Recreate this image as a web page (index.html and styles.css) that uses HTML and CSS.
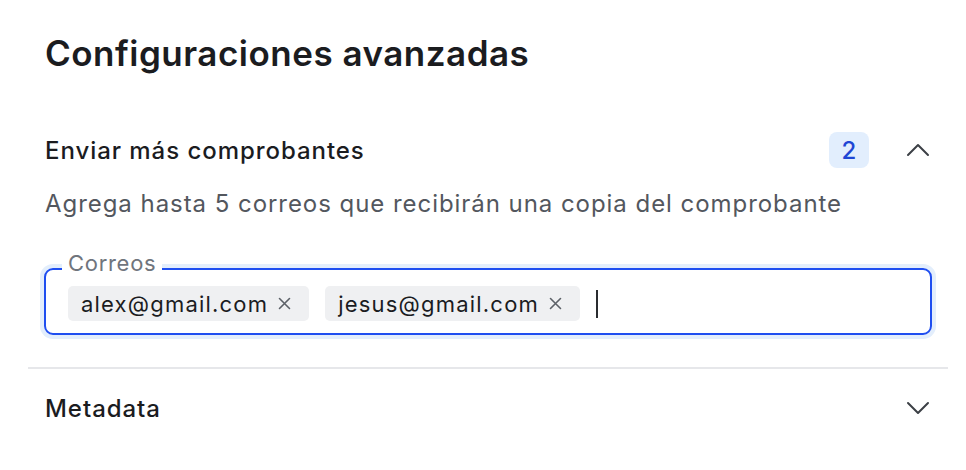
FILE: index.html
```html
<!DOCTYPE html>
<html lang="es">
<head>
<meta charset="utf-8">
<link rel="stylesheet" href="styles.css">
</head>
<body>
<div class="panel">
  <h1 class="title">Configuraciones avanzadas</h1>
  <section class="section open">
    <div class="sec-head">
      <span class="sec-title">Enviar más comprobantes</span>
      <span class="badge">2</span>
      <svg class="chev" width="24" height="24" viewBox="0 0 24 24" fill="none" stroke="currentColor" stroke-width="2" stroke-linecap="round" stroke-linejoin="round"><path d="M2 17L12 7L22 17"/></svg>
    </div>
    <p class="desc">Agrega hasta 5 correos que recibirán una copia del comprobante</p>
    <div class="field">
      <span class="legend">Correos</span>
      <span class="chip">alex@gmail.com <svg class="x" width="13" height="13" viewBox="0 0 13 13" fill="none" stroke="currentColor" stroke-width="1.6" stroke-linecap="round"><path d="M1.5 1.5L11.5 11.5M11.5 1.5L1.5 11.5"/></svg></span>
      <span class="chip">jesus@gmail.com <svg class="x" width="13" height="13" viewBox="0 0 13 13" fill="none" stroke="currentColor" stroke-width="1.6" stroke-linecap="round"><path d="M1.5 1.5L11.5 11.5M11.5 1.5L1.5 11.5"/></svg></span>
      <span class="caret"></span>
    </div>
  </section>
  <section class="section">
    <div class="sec-head">
      <span class="sec-title">Metadata</span>
      <svg class="chev" width="24" height="24" viewBox="0 0 24 24" fill="none" stroke="currentColor" stroke-width="2" stroke-linecap="round" stroke-linejoin="round"><path d="M2 7L12 17L22 7"/></svg>
    </div>
  </section>
</div>
</body>
</html>
```
FILE: styles.css
```css
* { box-sizing: border-box; }
body {
  margin: 0;
  background: #fff;
  font-family: Inter, "Noto Sans", sans-serif;
  color: #1b1c1f;
}
.panel {
  width: 920px;
  margin-left: 28px;
  padding-top: 33px;
}
.title {
  margin: 0;
  padding: 0 17px;
  font-size: 35px;
  line-height: 40px;
  font-weight: 600;
  letter-spacing: 0.5px;
}
.section {
  padding: 0 16px;
}
.section.open {
  padding-top: 59px;
  padding-bottom: 32px;
  border-bottom: 2px solid #e6e7ea;
}
.sec-head {
  display: flex;
  align-items: center;
  height: 36px;
}
.sec-title {
  flex: 1;
  padding-left: 1px;
  font-size: 24px;
  font-weight: 500;
  letter-spacing: 0.95px;
}
.badge {
  width: 40px;
  height: 36px;
  border-radius: 8px;
  background: #e2eefd;
  color: #1f46d4;
  font-size: 24px;
  font-weight: 500;
  display: flex;
  align-items: center;
  justify-content: center;
  margin-right: 37px;
}
.chev {
  color: #3c4046;
  margin-right: 2px;
}
.desc {
  margin: 18px 0 0 0;
  padding-left: 1px;
  font-size: 24px;
  line-height: 36px;
  color: #53575e;
  letter-spacing: 0.95px;
}
.field {
  position: relative;
  margin-top: 46px;
  height: 67px;
  border: 2px solid #1f4ef0;
  border-radius: 9px;
  box-shadow: 0 0 0 4px #e3eefc;
  display: flex;
  align-items: center;
  gap: 16px;
  padding: 0 22px;
}
.legend {
  position: absolute;
  left: 16px;
  top: -20px;
  background: #fff;
  padding: 0 6px;
  font-size: 22px;
  line-height: 26px;
  color: #70757d;
  letter-spacing: 0.7px;
}
.chip {
  display: inline-flex;
  align-items: center;
  height: 35px;
  padding: 0 18px 0 13px;
  border-radius: 5px;
  background: #eff0f2;
  font-size: 22px;
  color: #1b1c1f;
  letter-spacing: 1.2px;
  margin-top: 4px;
}
.chip .x {
  margin-left: 10px;
  color: #5c6168;
}
.caret {
  width: 2px;
  height: 28px;
  margin-top: 4px;
  background: #2a2c30;
}
.section:last-child .sec-head {
  margin-top: 21px;
}
```
